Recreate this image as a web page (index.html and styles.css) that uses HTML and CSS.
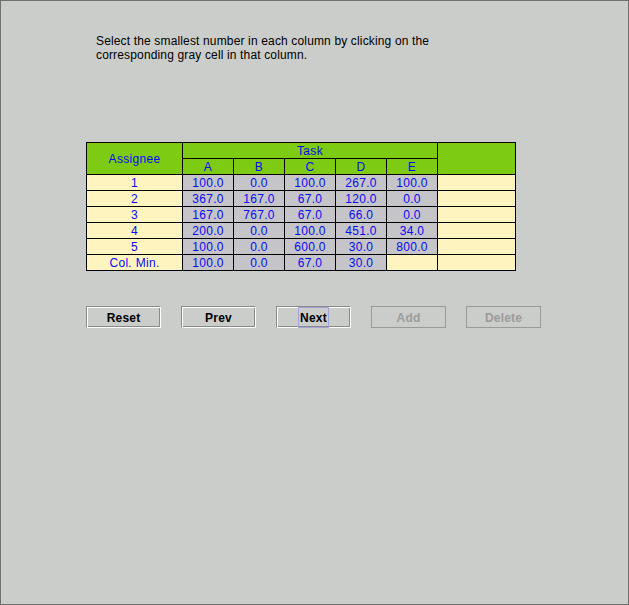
FILE: index.html
```html
<!DOCTYPE html>
<html>
<head>
<meta charset="utf-8">
<link rel="stylesheet" href="styles.css">
</head>
<body>
<div class="page">
  <p class="intro">Select the smallest number in each column by clicking on the<br>corresponding gray cell in that column.</p>
  <div class="grid">
    <div class="c h assignee">Assignee</div>
    <div class="c h task">Task</div>
    <div class="c h extra"></div>
    <div class="c h">A</div><div class="c h">B</div><div class="c h">C</div><div class="c h">D</div><div class="c h">E</div>

    <div class="c y">1</div><div class="c g">100.0</div><div class="c g">0.0</div><div class="c g">100.0</div><div class="c g">267.0</div><div class="c g">100.0</div><div class="c y"></div>
    <div class="c y">2</div><div class="c g">367.0</div><div class="c g">167.0</div><div class="c g">67.0</div><div class="c g">120.0</div><div class="c g">0.0</div><div class="c y"></div>
    <div class="c y">3</div><div class="c g">167.0</div><div class="c g">767.0</div><div class="c g">67.0</div><div class="c g">66.0</div><div class="c g">0.0</div><div class="c y"></div>
    <div class="c y">4</div><div class="c g">200.0</div><div class="c g">0.0</div><div class="c g">100.0</div><div class="c g">451.0</div><div class="c g">34.0</div><div class="c y"></div>
    <div class="c y">5</div><div class="c g">100.0</div><div class="c g">0.0</div><div class="c g">600.0</div><div class="c g">30.0</div><div class="c g">800.0</div><div class="c y"></div>
    <div class="c y">Col. Min.</div><div class="c g">100.0</div><div class="c g">0.0</div><div class="c g">67.0</div><div class="c g">30.0</div><div class="c y"></div><div class="c y"></div>
  </div>
  <div class="buttons">
    <div class="btn">Reset</div>
    <div class="btn">Prev</div>
    <div class="btn"><span class="focus">Next</span></div>
    <div class="btn disabled">Add</div>
    <div class="btn disabled">Delete</div>
  </div>
</div>
</body>
</html>
```
FILE: styles.css
```css
html, body {
  margin: 0;
  padding: 0;
}
body {
  font-family: "Liberation Sans", Arial, sans-serif;
  font-size: 12px;
}
.page {
  width: 629px;
  height: 605px;
  box-sizing: border-box;
  background: #cbcdca;
  box-shadow: inset 0 0 0 1px #6f716e;
  padding-top: 34px;
  overflow: hidden;
}
.intro {
  margin: 0 0 0 96px;
  line-height: 14px;
  letter-spacing: 0.15px;
  color: #000;
}
.grid {
  display: grid;
  grid-template-columns: 95px 50px 50px 50px 50px 50px 77px;
  grid-template-rows: repeat(8, 15px);
  gap: 1px;
  padding: 1px;
  background: #000;
  width: max-content;
  margin: 80px 0 0 86px;
}
.c {
  color: #0a0af0;
  text-align: center;
  line-height: 17px;
  letter-spacing: 0.3px;
  white-space: nowrap;
  overflow: hidden;
}
.h { background: #7dcb12; }
.y { background: #fdf4c0; }
.g { background: #c5c4c9; }
.assignee {
  grid-row: 1 / 3;
  grid-column: 1;
  line-height: 32px;
}
.task {
  grid-row: 1;
  grid-column: 2 / 7;
}
.extra {
  grid-row: 1 / 3;
  grid-column: 7;
}
.buttons {
  display: flex;
  gap: 20px;
  margin: 35px 0 0 86px;
}
.btn {
  width: 75px;
  height: 22px;
  box-sizing: border-box;
  padding-top: 1px;
  border: 1px solid #8a8a8a;
  border-right-color: #ffffff;
  border-bottom-color: #ffffff;
  box-shadow: inset 1px 1px 0 #ffffff, inset -1px -1px 0 #8a8a8a;
  display: flex;
  align-items: center;
  justify-content: center;
  font-weight: bold;
  letter-spacing: 0.2px;
  color: #000;
}
.btn.disabled {
  border: 1px solid #9a9a9a;
  box-shadow: none;
  color: #9c9c9c;
}
.focus {
  outline: 1px solid #a3a3dc;
  padding: 3px 1px 2px;
  line-height: 14px;
}
```
